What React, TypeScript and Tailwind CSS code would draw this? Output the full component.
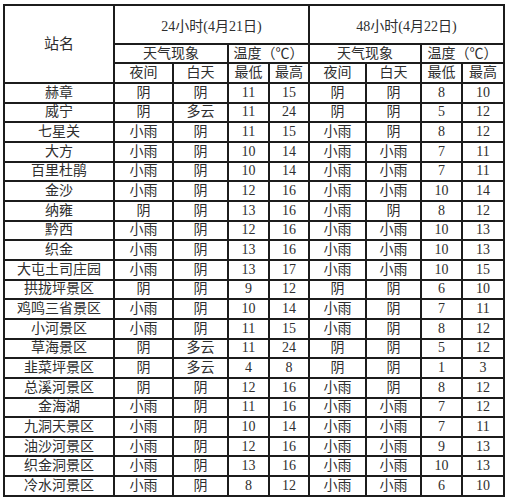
import React from 'react';

type Row = [string, string, string, number, number, string, string, number, number];

const rows: Row[] = [
  ['赫章', '阴', '阴', 11, 15, '阴', '阴', 8, 10],
  ['威宁', '阴', '多云', 11, 24, '阴', '阴', 5, 12],
  ['七星关', '小雨', '阴', 11, 15, '小雨', '阴', 8, 12],
  ['大方', '小雨', '阴', 10, 14, '小雨', '小雨', 7, 11],
  ['百里杜鹃', '小雨', '阴', 10, 14, '小雨', '小雨', 7, 11],
  ['金沙', '小雨', '阴', 12, 16, '小雨', '小雨', 10, 14],
  ['纳雍', '阴', '阴', 13, 16, '小雨', '阴', 8, 12],
  ['黔西', '小雨', '阴', 12, 16, '小雨', '小雨', 10, 13],
  ['织金', '小雨', '阴', 13, 16, '小雨', '小雨', 10, 13],
  ['大屯土司庄园', '小雨', '阴', 13, 17, '小雨', '小雨', 10, 15],
  ['拱拢坪景区', '阴', '阴', 9, 12, '阴', '阴', 6, 10],
  ['鸡鸣三省景区', '小雨', '阴', 10, 14, '小雨', '阴', 7, 11],
  ['小河景区', '小雨', '阴', 11, 15, '小雨', '阴', 8, 12],
  ['草海景区', '阴', '多云', 11, 24, '阴', '阴', 5, 12],
  ['韭菜坪景区', '阴', '多云', 4, 8, '阴', '阴', 1, 3],
  ['总溪河景区', '阴', '阴', 12, 16, '小雨', '阴', 8, 12],
  ['金海湖', '小雨', '阴', 11, 16, '小雨', '小雨', 7, 12],
  ['九洞天景区', '小雨', '阴', 10, 14, '小雨', '小雨', 7, 11],
  ['油沙河景区', '小雨', '阴', 12, 16, '小雨', '小雨', 9, 13],
  ['织金洞景区', '小雨', '阴', 13, 16, '小雨', '小雨', 10, 13],
  ['冷水河景区', '小雨', '阴', 8, 12, '小雨', '小雨', 6, 10],
];

const cell = 'border-2 border-[#1c1c1c] text-center align-middle p-0 leading-none whitespace-nowrap';
const font = { fontFamily: '"Liberation Serif", "Noto Sans CJK SC", serif' };

export default function App() {
  return (
    <div className="w-[506px] h-[500px] bg-white pt-[4px] pl-[3px]">
      <table
        className="table-fixed border-collapse w-[500px] text-[#2e2e2e] text-[14px]"
        style={font}
      >
        <colgroup>
          <col className="w-[110px]" />
          <col className="w-[59px]" />
          <col className="w-[55px]" />
          <col className="w-[41px]" />
          <col className="w-[40px]" />
          <col className="w-[57px]" />
          <col className="w-[55px]" />
          <col className="w-[41px]" />
          <col className="w-[42px]" />
        </colgroup>
        <thead>
          <tr className="h-[39px]">
            <th rowSpan={3} className={`${cell} font-normal text-[15px]`}>站名</th>
            <th colSpan={4} className={`${cell} font-normal text-[14px] pt-[5px]`}>24小时(4月21日)</th>
            <th colSpan={4} className={`${cell} font-normal text-[14px] pt-[5px]`}>48小时(4月22日)</th>
          </tr>
          <tr className="h-[19px]">
            <th colSpan={2} className={`${cell} font-normal`}>天气现象</th>
            <th colSpan={2} className={`${cell} font-normal`}>温度（℃）</th>
            <th colSpan={2} className={`${cell} font-normal`}>天气现象</th>
            <th colSpan={2} className={`${cell} font-normal`}>温度（℃）</th>
          </tr>
          <tr className="h-[20px]">
            <th className={`${cell} font-normal`}>夜间</th>
            <th className={`${cell} font-normal`}>白天</th>
            <th className={`${cell} font-normal`}>最低</th>
            <th className={`${cell} font-normal`}>最高</th>
            <th className={`${cell} font-normal`}>夜间</th>
            <th className={`${cell} font-normal`}>白天</th>
            <th className={`${cell} font-normal`}>最低</th>
            <th className={`${cell} font-normal`}>最高</th>
          </tr>
        </thead>
        <tbody>
          {rows.map((r) => (
            <tr key={r[0]} className="h-[19.67px]">
              {r.map((v, i) => (
                <td key={i} className={cell}>{v}</td>
              ))}
            </tr>
          ))}
        </tbody>
      </table>
    </div>
  );
}
